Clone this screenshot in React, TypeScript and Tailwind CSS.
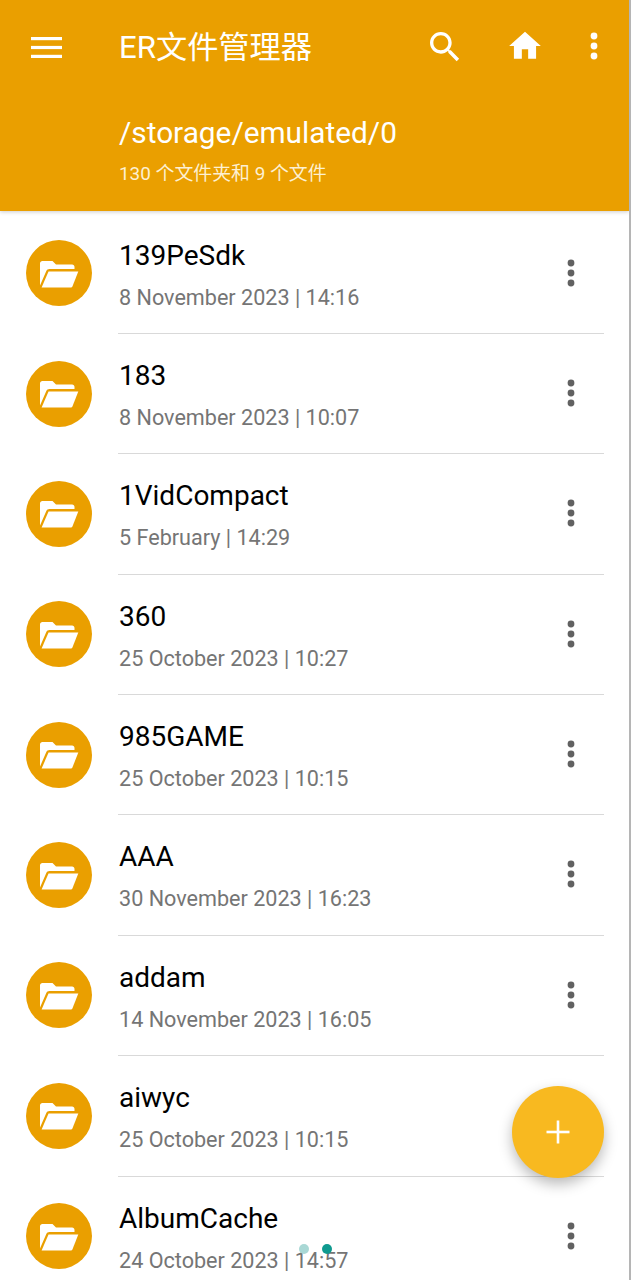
const rows = [
  ["139PeSdk", "8 November 2023 | 14:16"],
  ["183", "8 November 2023 | 10:07"],
  ["1VidCompact", "5 February | 14:29"],
  ["360", "25 October 2023 | 10:27"],
  ["985GAME", "25 October 2023 | 10:15"],
  ["AAA", "30 November 2023 | 16:23"],
  ["addam", "14 November 2023 | 16:05"],
  ["aiwyc", "25 October 2023 | 10:15"],
  ["AlbumCache", "24 October 2023 | 14:57"],
];

function Dots({ className }: { className: string }) {
  return (
    <svg viewBox="0 0 8 30" className={className} fill="currentColor">
      <circle cx="4" cy="5" r="3.4" />
      <circle cx="4" cy="15" r="3.4" />
      <circle cx="4" cy="25" r="3.4" />
    </svg>
  );
}

function FolderOpen() {
  return (
    <svg viewBox="0 0 40 28" className="w-[40px] h-[28px]" fill="#fff">
      <path d="M1 3.5C1 2 2 1 3.5 1h10l3.5 3.5h16c1.5 0 2.5 1 2.5 2.5v2H10.5c-1.6 0-2.7.8-3.3 2.2L1 25.5z" />
      <path d="M9.5 11.5h29.8L33.6 26c-.4 1-1.1 1.6-2.3 1.6H2.6z" />
    </svg>
  );
}

function Row({ name, date }: { name: string; date: string }) {
  return (
    <div className="h-[120.38px] shrink-0 flex relative">
      <div className="w-[118px] shrink-0 flex items-center pl-[26px] pb-[1px]">
        <div className="w-[66px] h-[66px] rounded-full bg-[#ea9f00] flex items-center justify-center pt-[1px]">
          <FolderOpen />
        </div>
      </div>
      <div className="w-[486px] flex items-start border-b border-[#d9d9d9] h-[120.38px]">
        <div className="flex-1 pl-[1px] pt-[23px]">
          <div className="text-[28px] leading-[38px] text-black whitespace-nowrap">{name}</div>
          <div className="text-[21.6px] leading-[28px] mt-[9px] text-[#757575] whitespace-nowrap">{date}</div>
        </div>
        <div className="w-[66px] pt-[44px] pl-[29px]">
          <Dots className="w-[8px] h-[30px] text-[#616161]" />
        </div>
      </div>
    </div>
  );
}

export default function App() {
  return (
    <div className="relative w-[631px] h-[1280px] overflow-hidden bg-white flex flex-col border-r-2 border-[#b5b5b5] font-['Roboto','Noto_Sans_CJK_SC',sans-serif]">
      <header className="h-[211px] shrink-0 bg-[#ea9f00] text-white shadow-[0_1px_4px_rgba(0,0,0,0.2)] z-10 flex flex-col">
        <div className="flex items-center h-[94px] pl-[31px]">
          <svg viewBox="0 0 31 21" className="w-[31px] h-[21px]" fill="#fff">
            <rect x="0" y="0" width="31" height="3.2" />
            <rect x="0" y="8.9" width="31" height="3.2" />
            <rect x="0" y="17.8" width="31" height="3.2" />
          </svg>
          <div className="ml-[57px] pt-[2px] text-[31.2px] leading-[40px] whitespace-nowrap flex-1">ER文件管理器</div>
          <svg viewBox="0 0 24 24" className="w-[40px] h-[40px] mr-[41px] mb-[1px]" fill="#fff">
            <path d="M15.5 14h-.79l-.28-.27C15.41 12.59 16 11.11 16 9.5 16 5.91 13.09 3 9.5 3S3 5.91 3 9.5 5.91 16 9.5 16c1.61 0 3.09-.59 4.23-1.57l.27.28v.79l5 4.99L20.49 19l-4.99-5zm-6 0C7.01 14 5 11.99 5 9.5S7.01 5 9.5 5 14 7.01 14 9.5 11.99 14 9.5 14z" />
          </svg>
          <svg viewBox="0 0 24 24" className="w-[38px] h-[38px] mr-[46px] mb-[2px]" fill="#fff">
            <path d="M10 20v-6h4v6h5v-8h3L12 3 2 12h3v8z" />
          </svg>
          <Dots className="w-[8px] h-[30px] text-white mr-[31px] mb-[3px]" />
        </div>
        <div className="pl-[119px] pt-[19px] text-[29.8px] leading-[40px] whitespace-nowrap">/storage/emulated/0</div>
        <div className="pl-[119px] mt-[9px] text-[18.9px] leading-[24px] text-[#fdf0d2] whitespace-nowrap">130 个文件夹和 9 个文件</div>
      </header>
      <main className="flex flex-col flex-1 pt-[2.5px] pr-[25px]">
        {rows.map(([n, d]) => (
          <Row key={n} name={n} date={d} />
        ))}
      </main>
      <button className="absolute left-[512px] top-[1086px] w-[92px] h-[92px] rounded-full bg-[#f8b920] shadow-[0_6px_14px_rgba(0,0,0,0.28)] flex items-center justify-center z-20">
        <svg viewBox="0 0 24 24" className="w-[24px] h-[24px]" fill="#fff">
          <rect x="0.5" y="10.7" width="23" height="2.6" />
          <rect x="10.7" y="0.5" width="2.6" height="23" />
        </svg>
      </button>
      <div className="absolute left-[299px] top-[1244px] w-[10px] h-[10px] rounded-full bg-[#a9d8d5] z-20" />
      <div className="absolute left-[322px] top-[1244px] w-[10px] h-[10px] rounded-full bg-[#0f9a8f] z-20" />
    </div>
  );
}
